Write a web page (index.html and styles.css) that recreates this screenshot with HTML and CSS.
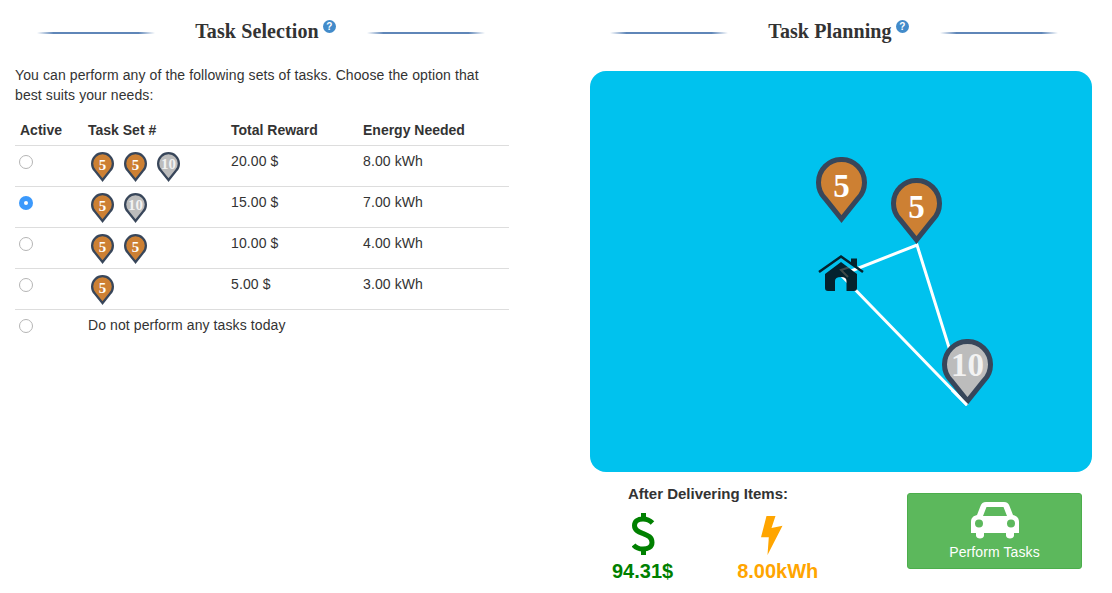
FILE: index.html
```html
<!DOCTYPE html>
<html lang="en">
<head>
<meta charset="utf-8">
<title>Task Selection and Planning</title>
<link rel="stylesheet" href="styles.css">
</head>
<body>
<svg class="defs" width="0" height="0" aria-hidden="true">
  <defs>
    <path id="pin-shape" d="M25.5 62L9 41.500A23 23 0 1 1 42 41.500Z"/>
    <symbol id="pin-copper" viewBox="0 0 51 66"><use href="#pin-shape" class="pin-copper"/><text x="25.5" y="40" class="pin-num">5</text></symbol>
    <symbol id="pin-silver" viewBox="0 0 51 66"><use href="#pin-shape" class="pin-silver"/><text x="25.5" y="37" class="pin-num pin-num-pale">10</text></symbol>
  </defs>
</svg>
<main class="page">
  <section class="col-left">
    <header class="heading">
      <span class="rule"></span>
      <h2 class="title">Task Selection<span class="help">?</span></h2>
      <span class="rule"></span>
    </header>
    <p class="intro">You can perform any of the following sets of tasks. Choose the option that best suits your needs:</p>
    <table class="tasks">
      <thead>
        <tr><th class="c-active">Active</th><th class="c-set">Task Set #</th><th class="c-reward">Total Reward</th><th>Energy Needed</th></tr>
      </thead>
      <tbody>
        <tr>
          <td><span class="radio"></span></td>
          <td><div class="pins"><svg class="pin"><use href="#pin-copper"/></svg><svg class="pin"><use href="#pin-copper"/></svg><svg class="pin"><use href="#pin-silver"/></svg></div></td>
          <td>20.00 $</td><td>8.00 kWh</td>
        </tr>
        <tr>
          <td><span class="radio on"></span></td>
          <td><div class="pins"><svg class="pin"><use href="#pin-copper"/></svg><svg class="pin"><use href="#pin-silver"/></svg></div></td>
          <td>15.00 $</td><td>7.00 kWh</td>
        </tr>
        <tr>
          <td><span class="radio"></span></td>
          <td><div class="pins"><svg class="pin"><use href="#pin-copper"/></svg><svg class="pin"><use href="#pin-copper"/></svg></div></td>
          <td>10.00 $</td><td>4.00 kWh</td>
        </tr>
        <tr>
          <td><span class="radio"></span></td>
          <td><div class="pins"><svg class="pin"><use href="#pin-copper"/></svg></div></td>
          <td>5.00 $</td><td>3.00 kWh</td>
        </tr>
        <tr class="last">
          <td><span class="radio"></span></td>
          <td colspan="3">Do not perform any tasks today</td>
        </tr>
      </tbody>
    </table>
  </section>
  <section class="col-right">
    <header class="heading">
      <span class="rule"></span>
      <h2 class="title">Task Planning<span class="help">?</span></h2>
      <span class="rule"></span>
    </header>
    <svg class="map" viewBox="590 71 502 401" role="img" aria-label="Task map">
      <polyline class="route" points="841,275 917,245 967,405 841,275"/>
      <g class="house">
        <path class="roof" d="M819 272L841 256.500L863 272"/>
        <path class="chimney" d="M851 258.500H857V268L851 264Z"/>
        <path class="walls" d="M841 262L857 274V288Q857 291 854 291H846.500V281Q846.500 277 841 277Q835 277 835 281V291H828Q825 291 825 288V274Z"/>
        <path class="route-ghost" d="M850 267L841 270L848 277"/>
      </g>
      <use href="#pin-copper" x="816" y="157" width="51" height="66"/>
      <use href="#pin-copper" x="891" y="178" width="51" height="66"/>
      <use href="#pin-silver" x="942" y="339" width="51" height="66"/>
      <line class="route" x1="952" y1="390" x2="967" y2="405"/>
    </svg>
    <div class="summary">
      <div class="after">
        <div class="after-label">After Delivering Items:</div>
        <div class="stats">
          <div class="stat money">
            <svg class="dollar" viewBox="0 0 23 42"><path class="dollar-s" d="M20.500 10C17 6.500 14 6 11 6C5.500 6 2.500 8.500 2.500 12.500C2.500 17.500 7 19 11 20.500C16 22.500 20 24 20 29.500C20 34 16 36 11 36C7.500 36 4 35 1.500 32"/><path class="dollar-bar" d="M9 0H14V6H9ZM9 36H14V42H9Z"/></svg>
            <span class="value">94.31$</span>
          </div>
          <div class="stat energy">
            <svg class="bolt" viewBox="0 0 22 39"><path d="M5.500 0H14.500L10.500 12L21.500 9.700L6.500 39L7.800 21.300H0Z"/></svg>
            <span class="value">8.00kWh</span>
          </div>
        </div>
      </div>
      <button class="perform" type="button">
        <svg class="car" viewBox="0 0 48 37"><path fill-rule="evenodd" d="M15 0H33C36 0 37.500 1.500 38.500 4L42 13C46 14 48 16 48 20V31H43V33.500C43 37.500 35 37.500 35 33.500V31H13V33.500C13 37.500 5 37.500 5 33.500V31H0V20C0 16 2 14 6 13L9.500 4C10.500 1.500 12 0 15 0ZM15.500 5L12 14H36L32.500 5ZM8 17.500A4 4 0 1 0 8 25.500A4 4 0 1 0 8 17.500ZM40 17.500A4 4 0 1 0 40 25.500A4 4 0 1 0 40 17.500Z"/></svg>
        <span>Perform Tasks</span>
      </button>
    </div>
  </section>
</main>
</body>
</html>
```
FILE: styles.css
```css
* { box-sizing: border-box; }
html, body { margin: 0; padding: 0; background: #fff; }
body {
  font-family: "Liberation Sans", Arial, sans-serif;
  font-size: 14px;
  line-height: 20px;
  color: #333;
}
.defs { position: absolute; }
.page { display: flex; width: 1112px; height: 593px; overflow: hidden; }
.col-left { width: 590px; padding: 0 0 0 15px; }
.col-right { width: 502px; }

.heading {
  display: flex;
  align-items: center;
  justify-content: space-between;
  width: 448px;
  height: 62px;
  margin-bottom: 3px;
}
.col-left .heading { margin-left: 22px; }
.col-right .heading { margin-left: 20px; margin-bottom: 9px; }
.rule {
  width: 118px;
  height: 2px;
  margin-top: 3px;
  background: linear-gradient(to right, rgba(80, 120, 175, 0), #5f86b8 14%, #5f86b8 86%, rgba(80, 120, 175, 0));
}
.title {
  display: flex;
  align-items: flex-start;
  margin: 0 -9px 0 0;
  font-family: "Liberation Serif", "Times New Roman", serif;
  font-size: 20px;
  line-height: 24px;
  font-weight: bold;
  letter-spacing: 0.1px;
  color: #333;
}
.help {
  width: 13px;
  height: 13px;
  margin: 1px 0 0 4px;
  border-radius: 50%;
  background: #428bca;
  color: #fff;
  font-family: "Liberation Sans", Arial, sans-serif;
  font-size: 10px;
  line-height: 13px;
  letter-spacing: 0;
  text-align: center;
}

.intro { width: 490px; margin: 0 0 14px; letter-spacing: 0.1px; }

.tasks { width: 494px; border-collapse: collapse; table-layout: fixed; }
.tasks th {
  height: 26px;
  padding: 0 5px 5px;
  text-align: left;
  font-weight: bold;
  vertical-align: bottom;
  border-bottom: 1px solid #ddd;
}
.tasks td {
  height: 41px;
  padding: 5px 5px 0;
  vertical-align: top;
  letter-spacing: 0.1px;
  border-bottom: 1px solid #ddd;
}
.tasks tr.last td { border-bottom: 0; }
.c-active { width: 68px; }
.c-set { width: 143px; }
.c-reward { width: 132px; }

.radio {
  display: block;
  width: 14px;
  height: 14px;
  margin: 4px 0 0 -1px;
  border: 1px solid #b5b5b5;
  border-radius: 50%;
  background: #fff;
}
.radio.on { position: relative; border: 0; background: #3b99fc; }
.radio.on::after {
  content: "";
  position: absolute;
  left: 5px;
  top: 5px;
  width: 4px;
  height: 4px;
  border-radius: 50%;
  background: #fff;
}

.pins { display: flex; gap: 10px; margin: 1px 0 0 3px; }
.pin { display: block; width: 23px; height: 30px; }

.pin-copper { fill: #cd8033; stroke: #38465a; stroke-width: 5; }
.pin-silver { fill: #bcbcbc; stroke: #38465a; stroke-width: 5; }
.pin-num {
  font-family: "Liberation Serif", "Times New Roman", serif;
  font-size: 33px;
  font-weight: bold;
  fill: #fff;
  text-anchor: middle;
}
.pin-num-pale { fill: #f2f2f2; }

.map { display: block; width: 502px; height: 401px; border-radius: 16px; background: #00c2ee; }
.route { fill: none; stroke: #fff; stroke-width: 3; }
.roof { fill: none; stroke: #04222e; stroke-width: 2.500; }
.chimney { fill: #04222e; }
.walls { fill: #04222e; }
.route-ghost { fill: none; stroke: #c9a488; stroke-width: 2; opacity: 0.3; }

.summary { display: flex; align-items: flex-start; padding: 12px 10px 0 22px; }
.after-label { padding-left: 16px; font-size: 15px; font-weight: bold; }
.stats { display: flex; gap: 64px; margin-top: 6px; }
.stat { display: flex; flex-direction: column; align-items: flex-start; }
.value { font-size: 20px; line-height: 22px; font-weight: bold; }
.money { color: #008000; }
.dollar { display: block; width: 23px; height: 42px; margin: 3px 0 5px 20px; }
.dollar-s { fill: none; stroke: #008000; stroke-width: 5; }
.dollar-bar { fill: #008000; }
.energy { color: #ffa500; }
.bolt { display: block; width: 22px; height: 39px; margin: 6px 0 5px 24px; fill: #ffa500; }

.perform {
  display: flex;
  flex-direction: column;
  align-items: center;
  width: 175px;
  height: 76px;
  margin: 9px 0 0 auto;
  padding: 8px 0 0;
  border: 1px solid #4cae4c;
  border-radius: 3px;
  background: #5cb85c;
  color: #fff;
  font: 14px/20px "Liberation Sans", Arial, sans-serif;
  letter-spacing: 0.1px;
}
.car { display: block; width: 48px; height: 37px; margin-bottom: 3px; fill: #fff; }
```
